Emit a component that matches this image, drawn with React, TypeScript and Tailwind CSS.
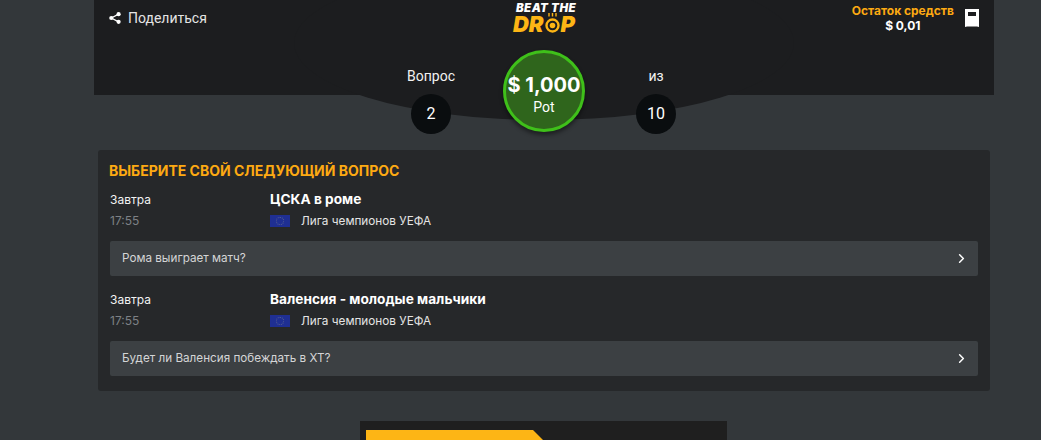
import { ChevronRight } from 'lucide-react'

function ShareIcon() {
  return (
    <svg width="12" height="12" viewBox="0 0 12 12" fill="white">
      <circle cx="9.6" cy="2.2" r="2.1" />
      <circle cx="2.3" cy="6" r="2.1" />
      <circle cx="9.6" cy="9.8" r="2.1" />
      <path d="M2.3 6 9.6 2.2M2.3 6l7.3 3.8" stroke="white" strokeWidth="1.3" />
    </svg>
  )
}

function WalletIcon() {
  return (
    <svg width="14" height="18" viewBox="0 0 14 18" className="block">
      <path d="M0 0h14v18l-2-.6H2L0 18z" fill="white" />
      <rect x="3" y="3" width="8" height="4" fill="#1c1d1f" />
    </svg>
  )
}

function Ball() {
  return (
    <svg width="17" height="20" viewBox="0 0 17 20" className="block shrink-0">
      <path d="M5 0v3.5M8.5 0v3.5M12 0v3.5" stroke="#fdb515" strokeWidth="1.4" />
      <circle cx="8.5" cy="12.5" r="6" fill="none" stroke="#fdb515" strokeWidth="2.4" />
      <circle cx="8.5" cy="12.5" r="2.8" fill="#fdb515" />
    </svg>
  )
}

function Logo() {
  return (
    <div className="flex flex-col items-center italic font-['Inter',sans-serif] font-black">
      <div className="text-[11.5px] text-white tracking-[0.4px] leading-[11px] h-[11px] pl-[4px]">BEAT THE</div>
      <div className="flex items-end text-[22px] text-[#fdb515] leading-[17px] h-[20px] pb-[1px]">
        <span>DR</span>
        <Ball />
        <span>P</span>
      </div>
    </div>
  )
}

function Counter({ label, value }: { label: string; value: string }) {
  return (
    <div className="flex flex-col items-center w-[60px]">
      <div className="text-sm text-[#f2f2f2] leading-5">{label}</div>
      <div className="mt-[8px] w-10 h-10 rounded-full bg-[#0a0d0f] flex items-center justify-center text-base text-white">
        {value}
      </div>
    </div>
  )
}

function EuFlag() {
  return (
    <div className="w-5 h-3 bg-[#1f2f93] flex items-center justify-center">
      <div className="w-[8px] h-[8px] rounded-full border border-dotted border-[#5a648f]" />
    </div>
  )
}

function Match({ title, question }: { title: string; question: string }) {
  return (
    <div>
      <div className="flex">
        <div className="w-[160px] text-xs">
          <div className="text-[#f2f2f2] leading-5 mt-[1px]">Завтра</div>
          <div className="text-[#7d8185] mt-[1px] leading-5">17:55</div>
        </div>
        <div>
          <div className="text-[13.7px] font-bold text-white leading-5">{title}</div>
          <div className="flex items-center gap-[11px] text-[11.75px] text-[#e4e4e4] leading-5 mt-[2px]">
            <EuFlag />
            Лига чемпионов УЕФА
          </div>
        </div>
      </div>
      <div className="mt-[10px] h-[35px] rounded-[2px] bg-[#3c4043] flex items-center justify-between pl-[12px] pr-[9px] text-[11.7px] text-[#d4d5d6]">
        {question}
        <ChevronRight size={15} strokeWidth={2.4} className="text-white" />
      </div>
    </div>
  )
}

export default function App() {
  return (
    <div className="h-[440px] overflow-hidden bg-[#33373a] font-['Inter','Liberation_Sans',sans-serif]">
      <div className="relative w-[900px] ml-[94px] h-[95px] bg-[#1c1d1f]">
        <div className="absolute left-[200px] top-[-34px] w-[500px] h-[154px] rounded-[50%] bg-[#1c1d1f]" />
        <div className="relative flex justify-between h-full">
          <div className="flex items-start gap-[7px] pl-[15px] pt-[12px] text-sm font-['Roboto',sans-serif] text-[#e4e4e4] leading-[12px] w-[240px]">
            <ShareIcon />
            <span>Поделиться</span>
          </div>
          <div className="pt-[3px]">
            <Logo />
          </div>
          <div className="flex justify-end items-start w-[240px] pr-[15px] pt-[3px]">
            <div className="flex flex-col items-center text-xs font-bold leading-[15px] mr-[11px]">
              <span className="text-[#fdaa12]">Остаток средств</span>
              <span className="text-white">$ 0,01</span>
            </div>
            <div className="mt-[6px]">
              <WalletIcon />
            </div>
          </div>
        </div>
        <div className="absolute left-[307px] top-[66px] font-['Roboto',sans-serif]">
          <Counter label="Вопрос" value="2" />
        </div>
        <div className="absolute left-[532px] top-[66px] font-['Roboto',sans-serif]">
          <Counter label="из" value="10" />
        </div>
        <div className="absolute left-[409px] top-[50px] w-[82px] h-[82px] rounded-full bg-[#2f651c] border-[3px] border-[#3fc01a] shadow-[0_3px_4px_rgba(0,0,0,0.45)] flex flex-col items-center justify-center text-white">
          <div className="text-xl font-bold leading-6 mt-[8px] whitespace-nowrap">$ 1,000</div>
          <div className="text-sm font-['Roboto',sans-serif] leading-5">Pot</div>
        </div>
      </div>

      <div className="ml-[98px] mt-[55px] w-[892px] h-[241px] rounded-[3px] bg-[#26282a] pl-[11px] pr-3 pt-[11px]">
        <div className="text-sm font-bold text-[#fdaa12] leading-5">ВЫБЕРИТЕ СВОЙ СЛЕДУЮЩИЙ ВОПРОС</div>
        <div className="mt-[8px] flex flex-col gap-[13px] pl-px">
          <Match title="ЦСКА в роме" question="Рома выиграет матч?" />
          <Match title="Валенсия - молодые мальчики" question="Будет ли Валенсия побеждать в ХТ?" />
        </div>
      </div>

      <div className="ml-[360px] mt-[30px] w-[367px] h-[100px] bg-[#1f1f1f] pt-[9px] pl-[6px]">
        <div className="w-[180px] h-[40px] bg-[#fdb515] [clip-path:polygon(0_0,167px_0,180px_13px,180px_100%,0_100%)]" />
      </div>
    </div>
  )
}
